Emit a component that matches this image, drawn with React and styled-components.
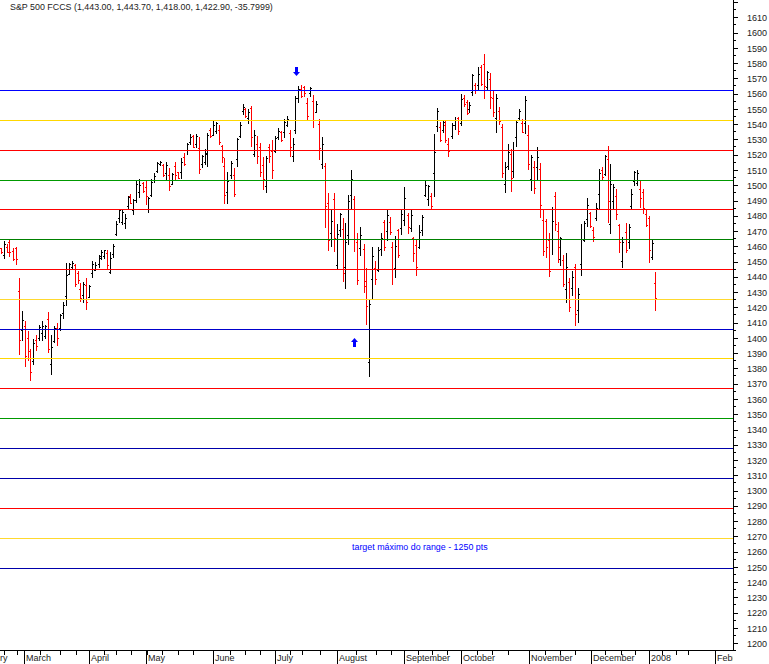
import React from "react";
import styled, { createGlobalStyle } from "styled-components";

const FONT = `"Liberation Sans", Arial, sans-serif`;

const LEVELS = [
  [90, "#0000ff"],
  [120, "#ffd700"],
  [150, "#ff0000"],
  [180, "#009900"],
  [209, "#ff0000"],
  [239, "#008000"],
  [269, "#ff0000"],
  [299, "#ffd92e"],
  [329, "#0000cc"],
  [358, "#ffd700"],
  [388, "#ff0000"],
  [418, "#009900"],
  [448, "#0000aa"],
  [478, "#0000aa"],
  [508, "#ff0000"],
  [538, "#ffd92e"],
  [568, "#0000aa"],
];

// x, high y, low y, r = down day
const BARS = [
  [1, 248, 254, "r"], [4, 241, 259], [7, 244, 253, "r"], [9, 240, 257, "r"], [13, 248, 261, "r"],
  [16, 247, 265, "r"], [19, 278, 355, "r"], [22, 311, 341], [25, 321, 367, "r"], [28, 331, 361, "r"],
  [30, 349, 381, "r"], [33, 339, 365], [36, 335, 351, "r"], [39, 325, 341], [42, 321, 341],
  [45, 325, 339], [48, 312, 353, "r"], [51, 335, 375], [54, 326, 343], [57, 323, 346, "r"],
  [60, 314, 331], [63, 302, 319], [66, 263, 306], [69, 263, 275], [72, 261, 269],
  [75, 264, 287, "r"], [78, 271, 284, "r"], [80, 283, 302, "r"], [83, 282, 303], [86, 278, 310, "r"],
  [89, 285, 298], [92, 261, 278], [95, 262, 271], [99, 255, 268], [101, 250, 260],
  [104, 250, 259], [107, 250, 270, "r"], [110, 252, 274], [113, 244, 258], [116, 221, 236],
  [119, 209, 223], [122, 209, 225], [125, 214, 229], [128, 196, 209], [130, 194, 204, "r"],
  [133, 199, 215], [136, 180, 203], [139, 179, 198], [143, 182, 193, "r"], [146, 181, 205, "r"],
  [148, 197, 213], [151, 179, 197], [154, 173, 183], [157, 162, 173], [160, 161, 166],
  [163, 164, 177, "r"], [166, 162, 180], [169, 168, 191, "r"], [172, 173, 185], [175, 162, 180, "r"],
  [178, 172, 179, "r"], [181, 158, 179], [184, 153, 166, "r"], [187, 143, 155], [190, 134, 145],
  [193, 135, 148, "r"], [196, 134, 148], [199, 137, 174, "r"], [202, 155, 168], [205, 149, 165],
  [207, 133, 167], [210, 128, 138, "r"], [213, 121, 136], [216, 122, 134], [219, 125, 145, "r"],
  [222, 145, 163, "r"], [224, 158, 204, "r"], [227, 172, 204], [231, 161, 179], [234, 168, 197, "r"],
  [237, 138, 167], [240, 122, 138], [243, 104, 115], [245, 108, 118, "r"], [248, 109, 124],
  [251, 106, 147, "r"], [254, 130, 157], [257, 136, 164, "r"], [260, 143, 177, "r"], [263, 157, 190, "r"],
  [266, 156, 193], [269, 144, 163, "r"], [272, 140, 179, "r"], [275, 136, 153], [278, 128, 140],
  [281, 131, 142, "r"], [284, 119, 138], [287, 116, 127], [290, 130, 157, "r"], [293, 138, 162],
  [295, 96, 134], [298, 86, 103], [301, 85, 98, "r"], [304, 86, 97, "r"], [307, 98, 120, "r"],
  [310, 87, 97], [313, 95, 128, "r"], [316, 101, 113], [319, 119, 160, "r"], [322, 137, 169],
  [325, 163, 228, "r"], [328, 193, 251, "r"], [331, 210, 247], [334, 193, 252, "r"], [337, 224, 269],
  [340, 213, 237], [343, 218, 282, "r"], [345, 223, 289], [348, 195, 245], [351, 170, 210],
  [354, 196, 252, "r"], [357, 233, 285, "r"], [360, 227, 256], [364, 244, 293, "r"], [366, 268, 325, "r"],
  [369, 300, 377], [372, 247, 299], [375, 261, 285, "r"], [378, 247, 272], [381, 233, 256],
  [384, 220, 251, "r"], [387, 210, 241], [390, 217, 235, "r"], [392, 242, 285, "r"], [395, 236, 278],
  [398, 229, 258, "r"], [401, 210, 235], [404, 187, 226], [408, 213, 234, "r"], [411, 210, 232],
  [413, 237, 262, "r"], [416, 239, 276, "r"], [419, 225, 249], [422, 215, 236], [425, 181, 197],
  [428, 185, 206], [431, 193, 209, "r"], [434, 134, 197], [437, 108, 132], [440, 122, 142, "r"],
  [443, 121, 133], [445, 121, 143, "r"], [448, 138, 157, "r"], [452, 123, 139], [455, 117, 130],
  [458, 117, 135, "r"], [461, 94, 126], [464, 95, 107, "r"], [467, 100, 115, "r"], [469, 102, 113],
  [472, 74, 96], [475, 83, 94, "r"], [478, 67, 90], [481, 65, 86, "r"], [484, 54, 99, "r"],
  [487, 71, 90], [490, 73, 109, "r"], [493, 90, 117, "r"], [496, 94, 133], [499, 107, 125, "r"],
  [502, 124, 178, "r"], [505, 162, 193], [508, 144, 170], [511, 149, 192, "r"], [513, 142, 178],
  [516, 121, 147], [519, 109, 121], [522, 119, 133, "r"], [525, 96, 134], [528, 125, 170, "r"],
  [531, 155, 191], [534, 161, 194, "r"], [537, 147, 180], [540, 163, 218, "r"], [543, 209, 256, "r"],
  [546, 219, 258, "r"], [549, 233, 277, "r"], [552, 207, 255], [555, 192, 231, "r"], [558, 222, 263, "r"],
  [560, 237, 266], [563, 255, 287, "r"], [566, 253, 303], [569, 278, 312, "r"], [572, 271, 296],
  [575, 264, 326, "r"], [578, 288, 323], [581, 224, 276], [584, 221, 242], [587, 198, 227],
  [590, 212, 228, "r"], [593, 227, 242, "r"], [596, 203, 221], [599, 169, 209], [602, 167, 180, "r"],
  [605, 155, 176], [608, 146, 223, "r"], [610, 164, 234], [613, 184, 209], [616, 189, 220, "r"],
  [619, 224, 253, "r"], [622, 237, 268], [626, 223, 253, "r"], [629, 224, 249], [631, 189, 209],
  [634, 171, 186], [637, 170, 186], [640, 181, 208, "r"], [643, 189, 214, "r"], [646, 210, 227, "r"],
  [649, 216, 263, "r"], [652, 239, 260], [655, 272, 311, "r"],
];

const MONTHS = [
  ["ry", 25],
  ["March", 65],
  ["April", 57],
  ["May", 67],
  ["June", 62],
  ["July", 62],
  ["August", 67],
  ["September", 57],
  ["October", 68],
  ["November", 62],
  ["December", 58],
  ["2008", 66],
  ["Febr", 18],
];

const MINOR_TICKS = [
  4, 17, 40, 60, 76, 104, 116, 131, 147, 162, 178, 193, 230, 245, 260, 290, 302, 320, 356, 376, 391, 418, 432,
  447, 477, 492, 508, 545, 560, 575, 605, 621, 635, 662, 676, 688,
];

const PRICES = Array.from({ length: 43 }, (_, i) => 1620 - i * 10);

const GlobalStyle = createGlobalStyle`
  html, body {
    margin: 0;
    padding: 0;
    background: #fff;
  }
`;

const Page = styled.div`
  width: 769px;
  height: 664px;
  overflow: hidden;
  display: grid;
  grid-template-columns: 734px 35px;
  grid-template-rows: 651px 13px;
  background: #fff;
  color: #222;
  font-family: ${FONT};
`;

const Plot = styled.div`
  position: relative;
  box-sizing: border-box;
  border-right: 1px solid #000;
  border-bottom: 1px solid #000;
`;

const Title = styled.div`
  position: relative;
  padding: 1px 0 0 10px;
  font-size: 8.9px;
  line-height: 12px;
  white-space: nowrap;
`;

const ChartSvg = styled.svg`
  position: absolute;
  left: 0;
  top: 0;
  shape-rendering: crispEdges;
`;

const Note = styled.div`
  position: absolute;
  left: 352px;
  top: 541px;
  font-size: 8.9px;
  line-height: 12px;
  color: #0000ff;
  white-space: nowrap;
`;

const PriceAxis = styled.div`
  display: flex;
  flex-direction: column;
  overflow: hidden;
`;

const PriceRow = styled.div`
  position: relative;
  flex: 0 0 15.27px;
  display: flex;
  align-items: center;
  justify-content: flex-end;
  padding-right: 2px;
  font-size: 9px;
  &:first-child {
    margin-top: -4.93px;
  }
  &::before,
  &::after {
    content: "";
    position: absolute;
    left: 0;
    height: 1px;
    background: #000;
  }
  &::before {
    top: 7px;
    width: 4px;
  }
  &::after {
    top: 14px;
    width: 2px;
  }
`;

const TimeAxis = styled.div`
  position: relative;
  display: flex;
  overflow: hidden;
`;

const MonthCell = styled.div`
  flex: 0 0 ${({ $width }) => $width}px;
  box-sizing: border-box;
  border-left: 1px solid ${({ $first }) => ($first ? "transparent" : "#000")};
  padding: 2px 0 0 ${({ $first }) => ($first ? 0 : 1)}px;
  margin-left: ${({ $first }) => ($first ? -1 : 0)}px;
  font-size: 9px;
  line-height: 11px;
  white-space: nowrap;
  overflow: hidden;
`;

const TickSvg = styled.svg`
  position: absolute;
  left: 0;
  top: 0;
  shape-rendering: crispEdges;
`;

const Corner = styled.div``;

// ticks are spread from the index, not read bar by bar
const tickY = (top, bottom, down, i) => {
  const h = bottom - top;
  const a = ((i * 7) % 5) / 5;
  const b = ((i * 3) % 7) / 7;
  const high = top + Math.round(h * (0.05 + a * 0.3));
  const low = top + Math.round(h * (0.62 + b * 0.33));
  return down ? [high, low] : [low, high];
};

const Bar = ({ x, top, bottom, down, index }) => {
  const color = down ? "#ff0000" : "#000000";
  const [open, close] = tickY(top, bottom, down, index);
  return (
    <g fill={color}>
      <rect x={x} y={top} width={1} height={bottom - top} />
      <rect x={x - 1} y={open} width={1} height={1} />
      <rect x={x + 1} y={close} width={1} height={1} />
    </g>
  );
};

const App = () => {
  return (
    <>
      <GlobalStyle />
      <Page>
        <Plot>
          <ChartSvg width="733" height="650" viewBox="0 0 733 650">
            {BARS.map(([x, top, bottom, r], i) => (
              <Bar key={x} x={x} top={top} bottom={bottom} down={r === "r"} index={i} />
            ))}
            {LEVELS.map(([y, color]) => (
              <rect key={y} x={0} y={y} width={733} height={1} fill={color} />
            ))}
            <g fill="#0000ff" shapeRendering="auto">
              <path d="M295 67h3v5h2l-3.5 4-3.5-4h2z" />
              <path d="M353 347h3v-5h2l-3.5-4-3.5 4h2z" />
            </g>
          </ChartSvg>
          <Title>S&amp;P 500 FCCS (1,443.00, 1,443.70, 1,418.00, 1,422.90, -35.7999)</Title>
          <Note>target máximo do range - 1250 pts</Note>
        </Plot>
        <PriceAxis>
          {PRICES.map((p) => (
            <PriceRow key={p}>{p === 1620 ? "" : p}</PriceRow>
          ))}
        </PriceAxis>
        <TimeAxis>
          {MONTHS.map(([name, width], i) => (
            <MonthCell key={name} $width={width} $first={i === 0}>
              {name}
            </MonthCell>
          ))}
          <TickSvg width="734" height="13" viewBox="0 0 734 13">
            {MINOR_TICKS.map((x) => (
              <rect key={x} x={x} y={0} width={1} height={4} fill="#000" />
            ))}
          </TickSvg>
        </TimeAxis>
        <Corner />
      </Page>
    </>
  );
};

export default App;
